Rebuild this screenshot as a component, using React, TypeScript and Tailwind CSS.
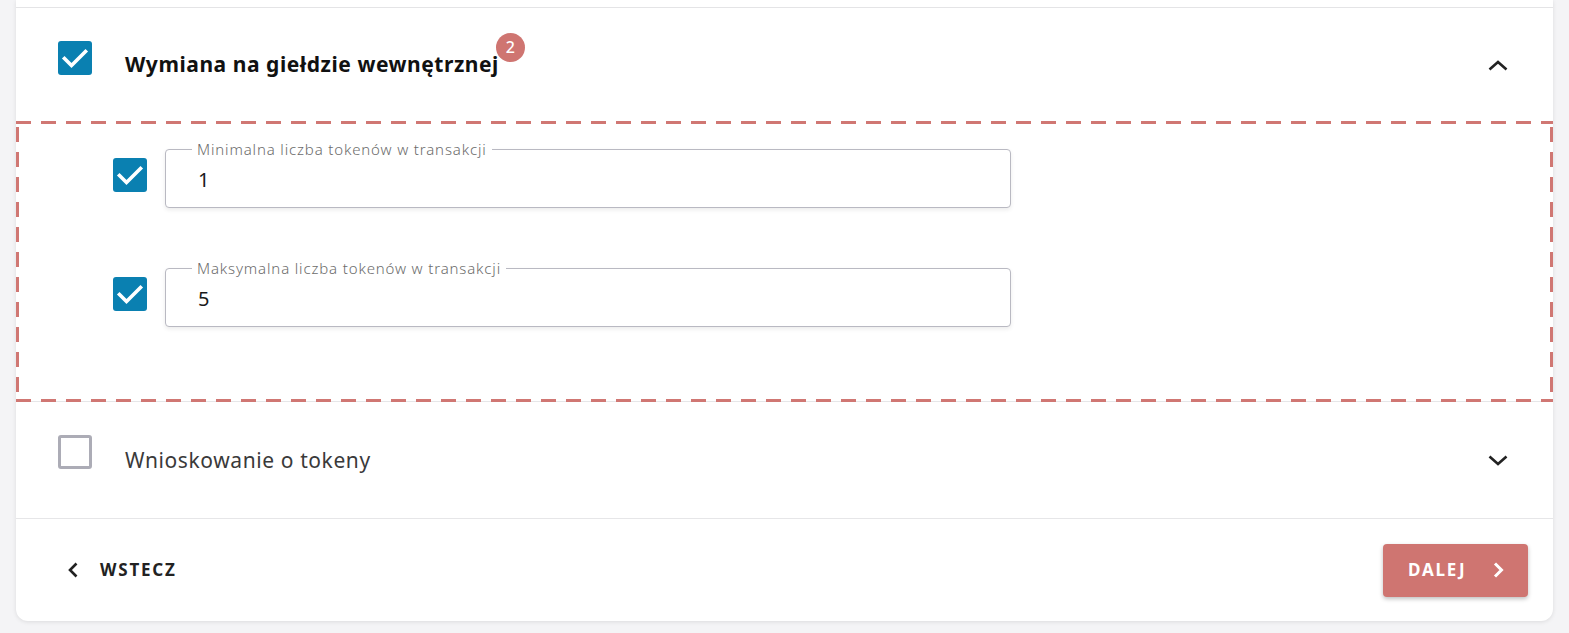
import React from "react";

const FONT = "font-['Noto_Sans',_'Open_Sans',_sans-serif]";

function CheckedBox({ className = "" }: { className?: string }) {
  return (
    <div className={`w-[34px] h-[34px] shrink-0 rounded-[3px] bg-[#0a80b1] flex items-center justify-center ${className}`}>
      <svg width="34" height="34" viewBox="0 0 34 34" fill="none">
        <path d="M6.5 17.5 L13.5 24.5 L27.5 10.5" stroke="#ffffff" strokeWidth="3.6" strokeLinecap="square" strokeLinejoin="miter" />
      </svg>
    </div>
  );
}

function EmptyBox({ className = "" }: { className?: string }) {
  return <div className={`w-[34px] h-[34px] shrink-0 rounded-[3px] border-[3px] border-[#acacb6] bg-white ${className}`} />;
}

function ChevronUp() {
  return (
    <svg width="24" height="24" viewBox="0 0 24 24" fill="none">
      <path d="M3.5 15.5 L12 8 L20.5 15.5" stroke="#222" strokeWidth="2.6" />
    </svg>
  );
}

function ChevronDown() {
  return (
    <svg width="24" height="24" viewBox="0 0 24 24" fill="none">
      <path d="M3.5 8.5 L12 16 L20.5 8.5" stroke="#222" strokeWidth="2.6" />
    </svg>
  );
}

function NumberField({ label, value }: { label: string; value: string }) {
  return (
    <div className="relative w-[846px] h-[59px] rounded-[4px] border border-[#b9b9c2] bg-white shadow-[0_2px_4px_rgba(0,0,0,0.08)] flex items-center pl-[32px]">
      <span className="absolute left-[26px] top-[-10px] px-[5px] bg-white text-[15px] leading-[18px] tracking-[0.85px] text-[#6b6b6b] font-light">
        {label}
      </span>
      <span className="text-[20px] text-[#1a1a1a] leading-[28px] mt-[2px]">{value}</span>
    </div>
  );
}

export default function App() {
  return (
    <div className={`${FONT} w-full h-[633px] bg-[#f4f4f6] px-[16px] pb-[11px]`}>
      <div className="bg-white rounded-b-[12px] shadow-[0_1px_4px_rgba(0,0,0,0.10)] flex flex-col">
        {/* top strip of the previous section */}
        <div className="h-[8px] border-b border-[#e4e4e6]" />

        {/* Heading row */}
        <div className="flex items-start h-[113px] pl-[42px] pr-[43px] pt-[33px]">
          <CheckedBox />
          <div className="relative ml-[33px] mt-[8px]">
            <span className="text-[21px] leading-[30px] font-bold tracking-[0.55px] text-[#111]">Wymiana na giełdzie wewnętrznej</span>
            <span className="absolute left-full -ml-[3px] top-[-16px] w-[29px] h-[29px] rounded-full bg-[#cf7571] text-white text-[16px] font-medium leading-[29px] text-center">
              2
            </span>
          </div>
          <div className="ml-auto mt-[13px]">
            <ChevronUp />
          </div>
        </div>

        {/* Dashed highlighted area */}
        <div className="relative flex flex-col gap-[60px] pt-[28px] pb-[74px] pl-[97px] border-b border-[#e6e6e8]">
          <div className="flex items-start gap-[18px]">
            <CheckedBox className="mt-[9px]" />
            <NumberField label="Minimalna liczba tokenów w transakcji" value="1" />
          </div>
          <div className="flex items-start gap-[18px]">
            <CheckedBox className="mt-[9px]" />
            <NumberField label="Maksymalna liczba tokenów w transakcji" value="5" />
          </div>
          {/* dashed border overlay */}
          <div className="pointer-events-none absolute left-0 right-0 top-0 h-[3px] bg-[repeating-linear-gradient(90deg,#d07773_0px,#d07773_15px,transparent_15px,transparent_25px)]" />
          <div className="pointer-events-none absolute left-0 right-0 bottom-[-1px] h-[3px] bg-[repeating-linear-gradient(90deg,#d07773_0px,#d07773_15px,transparent_15px,transparent_25px)]" />
          <div className="pointer-events-none absolute left-0 top-0 bottom-0 w-[3px] bg-[repeating-linear-gradient(180deg,transparent_0px,transparent_6px,#d07773_6px,#d07773_21px,transparent_21px,transparent_25px)]" />
          <div className="pointer-events-none absolute right-0 top-0 bottom-0 w-[3px] bg-[repeating-linear-gradient(180deg,transparent_0px,transparent_6px,#d07773_6px,#d07773_21px,transparent_21px,transparent_25px)]" />
        </div>

        {/* Second accordion row */}
        <div className="flex items-start h-[117px] pl-[42px] pr-[43px] pt-[33px] border-b border-[#e6e6e8]">
          <EmptyBox />
          <span className="ml-[33px] mt-[10px] text-[21px] leading-[30px] tracking-[0.6px] text-[#3a3a3a]">Wnioskowanie o tokeny</span>
          <div className="ml-auto mt-[13px]">
            <ChevronDown />
          </div>
        </div>

        {/* Footer */}
        <div className="flex items-center justify-between h-[102px] pl-[51px] pr-[25px]">
          <button className="flex items-center gap-[21px] text-[#222]">
            <svg width="12" height="16" viewBox="0 0 12 16" fill="none">
              <path d="M9.5 1.5 L3 8 L9.5 14.5" stroke="#222" strokeWidth="2.6" />
            </svg>
            <span className="text-[17px] font-bold tracking-[1.8px]">WSTECZ</span>
          </button>
          <button className="flex items-center justify-between w-[145px] h-[53px] rounded-[4px] bg-[#cf7571] shadow-[0_2px_4px_rgba(0,0,0,0.25)] pl-[25px] pr-[23px] text-white">
            <span className="text-[17px] font-bold tracking-[1.8px]">DALEJ</span>
            <svg width="14" height="16" viewBox="0 0 14 16" fill="none">
              <path d="M4 1.5 L10.5 8 L4 14.5" stroke="#fff" strokeWidth="3" />
            </svg>
          </button>
        </div>
      </div>
    </div>
  );
}
